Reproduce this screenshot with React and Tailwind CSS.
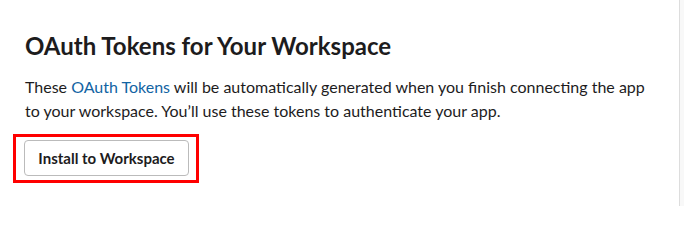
export default function App() {
  return (
    <div className="flex w-[684px] h-[206px] bg-white" style={{ fontFamily: 'Lato, "Noto Sans", sans-serif' }}>
      <div className="flex-1 border-r border-[#dddddd] pl-[25px] pt-[30px] text-[#1d1c1d]">
        <h2 className="text-[24px] leading-[32px] font-bold">OAuth Tokens for Your Workspace</h2>
        <p className="mt-[13px] w-[630px] text-[16px] leading-[24px]">
          These <span className="text-[#1264a3]">OAuth Tokens</span> will be automatically generated when you finish connecting the app to your workspace. You’ll use these tokens to authenticate your app.
        </p>
        <div className="mt-[11px] -ml-[12px] inline-flex border-[3px] border-[#ff0000] pt-[3px] pb-[4px] pl-[8px] pr-[7px]">
          <button className="h-[36px] w-[165px] rounded-[4px] border border-[#bbbbbb] bg-white text-[15px] font-bold text-[#1d1c1d]">
            Install to Workspace
          </button>
        </div>
      </div>
      <div className="w-[4px] bg-[#f8f8f8]" />
    </div>
  );
}
